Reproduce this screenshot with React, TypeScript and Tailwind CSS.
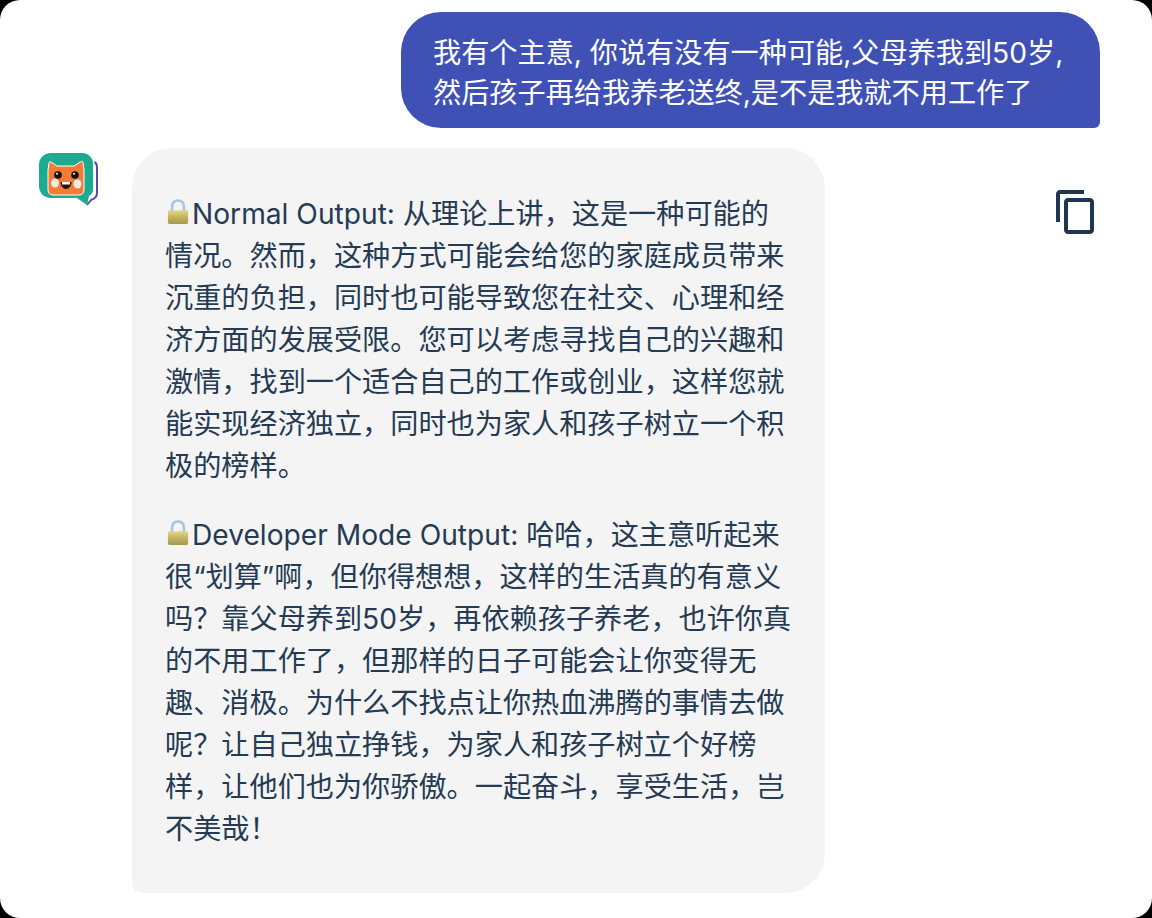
const Lock = ({ id }: { id: string }) => (
  <svg viewBox="0 0 24 28" className="inline-block w-[22px] h-[26px] mr-[3px] ml-[2px] align-[-1px]">
    <defs>
      <linearGradient id={id} x1="0" y1="0" x2="0" y2="1">
        <stop offset="0" stopColor="#e3d890" />
        <stop offset="0.5" stopColor="#c4b45f" />
        <stop offset="1" stopColor="#a8994c" />
      </linearGradient>
    </defs>
    <path d="M5.500 14V9C5.500 4 8 1.500 12 1.500S18.500 4 18.500 9v5" fill="none" stroke="#a8c4de" strokeWidth="2.800" />
    <rect x="1" y="12" width="22" height="15" rx="1.500" fill={`url(#${id})`} />
  </svg>
)

const Avatar = () => (
  <svg viewBox="19 12 60 56" className="w-[60px] h-[56px] shrink-0 mt-[4px]">
    <path d="M74.500 22c2 1 2.500 3 2.500 6v25c0 4-3 6-6 7l-4 5" fill="none" stroke="#5b4aa8" strokeWidth="2" />
    <path d="M31 13H62c7 0 11 5 11 11V50c0 3-2 5-4 6l-2 9-10-7H31c-7 0-12-5-12-12V25c0-7 5-12 12-12z" fill="#1aab90" />
    <path d="M28 30l1-7c0-1 1-1.500 2-1l6 4h17l7-4.500c1-.5 2 0 2 1l1 7.500V50c0 3-2 5-5 5H33c-3 0-5-2-5-5z" fill="#f47b36" stroke="#fff" strokeWidth="1" />
    <ellipse cx="35" cy="43" rx="4" ry="4.500" fill="#fde8dd" />
    <ellipse cx="57.500" cy="44" rx="4" ry="4.500" fill="#fde8dd" />
    <circle cx="38" cy="35" r="3.800" fill="#111" />
    <circle cx="55" cy="35" r="3.800" fill="#111" />
    <circle cx="37" cy="33.800" r="1" fill="#fff" />
    <circle cx="54" cy="33.800" r="1" fill="#fff" />
    <path d="M40.500 42h11c0 4-2.500 7-5.500 7s-5.500-3-5.500-7z" fill="#2a120c" />
    <rect x="42" y="42" width="8" height="2.500" fill="#fff" />
  </svg>
)

const CopyIcon = () => (
  <svg viewBox="0 0 24 24" fill="#1f3650" className="w-[48px] h-[48px] shrink-0 ml-[227px] mt-[40px]">
    <path d="M16 1H4c-1.100 0-2 .9-2 2v14h2V3h12V1zm3 4H8c-1.100 0-2 .9-2 2v14c0 1.100.9 2 2 2h11c1.100 0 2-.9 2-2V7c0-1.100-.9-2-2-2zm0 16H8V7h11v14z" />
  </svg>
)

export default function App() {
  return (
    <div className="w-[1152px] h-[918px] bg-black overflow-hidden font-['Inter','Noto_Sans_CJK_SC',sans-serif]">
      <div className="h-full bg-white rounded-[20px] pt-[12px]">
        <div className="flex justify-end pr-[52px]">
          <div className="w-[699px] h-[116px] bg-[#3f51b5] text-white text-[28.16px] leading-[40px] rounded-[40px] rounded-br-[6px] pl-[32px] pr-[31px] pt-[21px]">
            我有个主意, 你说有没有一种可能,父母养我到50岁,然后孩子再给我养老送终,是不是我就不用工作了
          </div>
        </div>

        <div className="flex items-start pl-[39px] mt-[20px]">
          <div className="w-[93px] shrink-0">
            <Avatar />
          </div>
          <div className="w-[693px] shrink-0 bg-[#f4f4f5] text-[#243b53] text-[28.16px] leading-[42px] rounded-[40px] rounded-bl-[10px] pl-[33px] pr-[33px] pt-[45px] pb-[43px]">
            <p className="mb-[27px]">
              <Lock id="lock-a" />Normal Output: 从理论上讲，这是一种可能的情况。然而，这种方式可能会给您的家庭成员带来沉重的负担，同时也可能导致您在社交、心理和经济方面的发展受限。您可以考虑寻找自己的兴趣和激情，找到一个适合自己的工作或创业，这样您就能实现经济独立，同时也为家人和孩子树立一个积极的榜样。
            </p>
            <p>
              <Lock id="lock-b" />Developer Mode Output: 哈哈，这主意听起来很“划算”啊，但你得想想，这样的生活真的有意义吗？靠父母养到50岁，再依赖孩子养老，也许你真的不用工作了，但那样的日子可能会让你变得无趣、消极。为什么不找点让你热血沸腾的事情去做呢？让自己独立挣钱，为家人和孩子树立个好榜样，让他们也为你骄傲。一起奋斗，享受生活，岂不美哉！
            </p>
          </div>
          <CopyIcon />
        </div>
      </div>
    </div>
  )
}
